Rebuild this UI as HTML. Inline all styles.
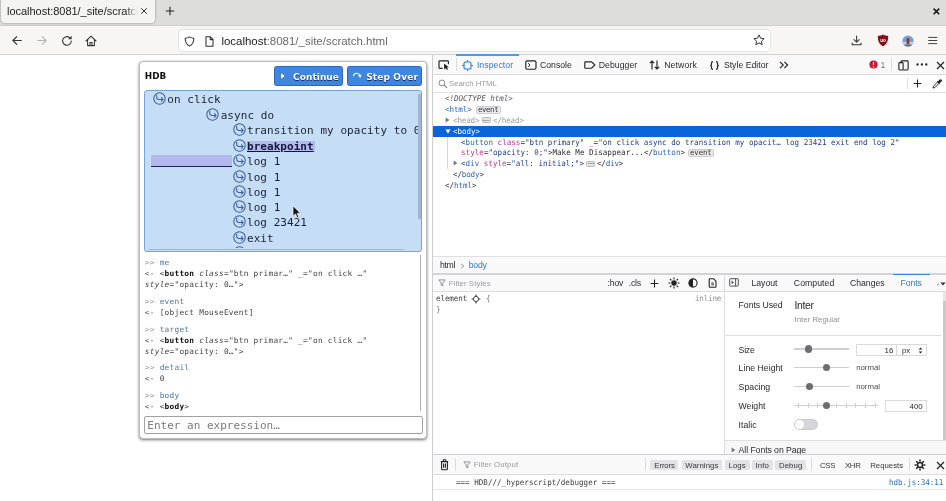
<!DOCTYPE html>
<html><head><meta charset="utf-8"><title>scratch</title>
<style>
*{box-sizing:border-box;margin:0;padding:0}
html,body{width:946px;height:501px;overflow:hidden;background:#fff;font-family:"Liberation Sans",sans-serif;color:#111}
#w{position:absolute;left:0;top:0;width:946px;height:501px;filter:blur(0.45px)}
.a{position:absolute;white-space:nowrap}
.f{white-space:pre}
.cl{font:11px/15.4px "DejaVu Sans Mono",monospace;letter-spacing:0.05px;color:#1b2130;height:15.4px}
.ic{width:13px;height:13px;margin-top:-1.6px}
.cur{font-weight:bold;text-decoration:underline;color:#14183a}
.con b{color:#111}
.ar{color:#9a9aa2}
.al{color:#5a5a5a}
.inp{color:#4a78b0}
.tg{color:#2b62c4}
.an{color:#c030a0}
.av{color:#1c3a9a}
.btn{background:#3f86e0;border:1px solid #2a68bd;border-radius:2px}
</style></head><body>
<div id="w">
<div class="a" style="left:-5px;top:-5px;width:956px;height:31px;background:#dddddb;"></div>
<div class="a" style="left:-5px;top:25.4px;width:956px;height:1px;background:#cdcdca;"></div>
<div class="a" style="left:1px;top:-3px;width:154px;height:26px;background:#f4f4f3;border-radius:0 0 4px 4px;box-shadow:0 0 2.5px rgba(0,0,0,.4)"></div>
<div class="a" style="left:0;top:0;width:138px;height:24px;overflow:hidden;-webkit-mask-image:linear-gradient(90deg,#000 126px,transparent 138px);mask-image:linear-gradient(90deg,#000 126px,transparent 138px)">
<div class="a f" style="left:7.0px;top:3.6px;font:normal normal 11px/14px 'Liberation Sans',sans-serif;color:#1c1c1c;letter-spacing:-0.027px;">localhost:8081/_site/scratch.html</div>
</div>
<svg class="a" style="left:140px;top:7px;" width="8" height="8" viewBox="0 0 8 8"><path d="M1.2 1.2 L6.8 6.8 M6.8 1.2 L1.2 6.8" stroke="#333" stroke-width="1" fill="none"/></svg>
<svg class="a" style="left:164.5px;top:6.1px;" width="10" height="10" viewBox="0 0 10 10"><path d="M5 0.8 V9.2 M0.8 5 H9.2" stroke="#222" stroke-width="1.1" fill="none"/></svg>
<svg class="a" style="left:931.7px;top:7px;" width="9" height="9" viewBox="0 0 9 9"><path d="M1.6 1.6 L7.2 7.2 M7.2 1.6 L1.6 7.2" stroke="#1a1a1a" stroke-width="1.6" fill="none"/></svg>
<div class="a" style="left:-5px;top:26px;width:956px;height:28px;background:#f7f6f4;"></div>
<div class="a" style="left:-5px;top:53.5px;width:956px;height:1px;background:#d2d2d2;"></div>
<svg class="a" style="left:10.5px;top:35px;" width="12" height="11" viewBox="0 0 12 11"><path d="M10.3 5.5 H2 M5.8 1.7 L1.9 5.5 L5.8 9.3" stroke="#333" stroke-width="1.1" fill="none" stroke-linecap="round" stroke-linejoin="round"/></svg>
<svg class="a" style="left:36px;top:35px;" width="12" height="11" viewBox="0 0 12 11"><path d="M1.7 5.5 H10 M6.2 1.7 L10.1 5.5 L6.2 9.3" stroke="#b4b4b4" stroke-width="1.1" fill="none" stroke-linecap="round" stroke-linejoin="round"/></svg>
<svg class="a" style="left:60.5px;top:34.5px;" width="12" height="12" viewBox="0 0 12 12"><path d="M10.2 6 A4.3 4.3 0 1 1 8.6 2.6" stroke="#333" stroke-width="1.1" fill="none" stroke-linecap="round"/><path d="M10.6 0.8 V4.2 H7.2 Z" fill="#333"/></svg>
<svg class="a" style="left:85px;top:34.5px;" width="12" height="12" viewBox="0 0 12 12"><path d="M1 6 L6 1.2 L11 6 M2.6 5.2 V10.6 H9.4 V5.2 M5 10.6 V7.4 H7 V10.6" stroke="#333" stroke-width="1.05" fill="none" stroke-linejoin="round" stroke-linecap="round"/></svg>
<div class="a" style="left:178.6px;top:29.6px;width:591.6px;height:21.8px;background:#fff;border-radius:4px;box-shadow:0 0 0 1px #e3e3e3"></div>
<svg class="a" style="left:184px;top:35.5px;" width="11" height="11" viewBox="0 0 11 11"><path d="M5.5 0.9 C4 1.9 2.6 2.2 1.2 2.2 C1.2 6 2.4 8.6 5.5 10.1 C8.6 8.6 9.8 6 9.8 2.2 C8.4 2.2 7 1.9 5.5 0.9 Z" stroke="#333" stroke-width="1.05" fill="none" stroke-linejoin="round"/></svg>
<svg class="a" style="left:204.5px;top:35.5px;" width="9" height="11" viewBox="0 0 9 11"><path d="M1 0.8 H5.4 L8 3.4 V10.2 H1 Z M5.2 0.9 V3.6 H7.9" stroke="#333" stroke-width="1.05" fill="none" stroke-linejoin="round"/></svg>
<div class="a f" style="left:221.4px;top:33.7px;font:normal normal 11.5px/15px 'Liberation Sans',sans-serif;color:#1a1a1a;letter-spacing:-0.016px;">localhost<span style="color:#6a6a6a">:8081/_site/scratch.html</span></div>
<svg class="a" style="left:753.3px;top:34.3px;" width="12" height="12" viewBox="0 0 12 12"><path d="M6 0.9 L7.55 4.2 L11.1 4.65 L8.5 7.1 L9.15 10.65 L6 8.9 L2.85 10.65 L3.5 7.1 L0.9 4.65 L4.45 4.2 Z" stroke="#333" stroke-width="1" fill="none" stroke-linejoin="round"/></svg>
<svg class="a" style="left:851.3px;top:34.5px;" width="11" height="11" viewBox="0 0 11 11"><path d="M5.6 1 V7 M3 4.6 L5.6 7.2 L8.2 4.6 M1.2 7.9 V9.8 H10 V7.9" stroke="#333" stroke-width="1.05" fill="none" stroke-linecap="round" stroke-linejoin="round"/></svg>
<svg class="a" style="left:876.5px;top:34px;" width="12" height="13" viewBox="0 0 12 13"><path d="M6 0.6 C4.3 1.7 2.6 2 0.8 2 C0.8 7 2.2 10.3 6 12.4 C9.8 10.3 11.2 7 11.2 2 C9.4 2 7.7 1.7 6 0.6 Z" fill="#80101a"/><text x="6" y="8.2" font-size="4.6" font-family="Liberation Sans,sans-serif" font-weight="bold" fill="#fff" text-anchor="middle">uo</text></svg>
<svg class="a" style="left:901.5px;top:34.5px;" width="12" height="12" viewBox="0 0 12 12"><defs><clipPath id="av"><circle cx="6" cy="6" r="5.6"/></clipPath></defs><g clip-path="url(#av)"><rect width="12" height="12" fill="#7a9fd0"/><rect y="7" width="12" height="5" fill="#c9d3e0"/><rect x="4.6" y="3.2" width="2.8" height="6" fill="#8a3a34"/><rect x="0" y="9.5" width="12" height="3" fill="#5a6a80"/></g></svg>
<svg class="a" style="left:926.5px;top:35.5px;" width="11" height="9" viewBox="0 0 11 9"><path d="M1.6 1.4 H9.8 M1.6 4.5 H9.8 M1.6 7.6 H9.8" stroke="#444" stroke-width="1" fill="none" stroke-linecap="round"/></svg>
<div class="a" style="left:-5px;top:54.5px;width:437.5px;height:452px;background:#fff;"></div>
<div class="a" style="left:139.3px;top:61px;width:287.5px;height:378px;background:#fff;border:1px solid #bdbdbd;border-radius:4px;box-shadow:0 1px 3px rgba(0,0,0,.55)"></div>
<div class="a f" style="left:144.8px;top:70.7px;font:normal bold 8.8px/11px 'DejaVu Sans','Liberation Sans',sans-serif;color:#111;letter-spacing:0.008px;">HDB</div>
<div class="a" style="left:274.2px;top:65.6px;width:68.8px;height:20.8px;background:#3f86e0;border:1px solid #2a68bd;border-radius:2.5px"></div>
<div class="a" style="left:347.4px;top:65.6px;width:74.8px;height:20.8px;background:#3f86e0;border:1px solid #2a68bd;border-radius:2.5px"></div>
<svg class="a" style="left:280.3px;top:71.7px;" width="6" height="8" viewBox="0 0 6 8"><path d="M0.8 0.4 L5 4 L0.8 7.6 Z" fill="#fff" stroke="#1d3d70" stroke-width="0.4"/></svg>
<div class="a f" style="left:293.0px;top:70.5px;font:normal bold 9px/12px 'DejaVu Sans','Liberation Sans',sans-serif;color:#fff;letter-spacing:0.061px;text-shadow:0 0.8px 0.8px #0e2a55;">Continue</div>
<svg class="a" style="left:352px;top:70.5px;" width="10" height="9" viewBox="0 0 10 9"><path d="M1.4 5.2 A3.4 3.4 0 0 1 8 4.6" stroke="#fff" stroke-width="1.1" fill="none"/><path d="M9.6 3.4 L8.3 6.9 L5.9 4.4 Z" fill="#fff"/></svg>
<div class="a f" style="left:366.2px;top:70.5px;font:normal bold 9px/12px 'DejaVu Sans','Liberation Sans',sans-serif;color:#fff;letter-spacing:0.141px;text-shadow:0 0.8px 0.8px #0e2a55;">Step Over</div>
<div class="a" style="left:144.4px;top:90.3px;width:277.8px;height:161.6px;background:#c5def6;border:1px solid #78a3d7;border-radius:3px;overflow:hidden">
<svg width="0" height="0" style="position:absolute"><defs><g id="ic" fill="none" stroke="#3d5f98" stroke-width="1.05"><circle cx="6.5" cy="6.5" r="5.7"/><path d="M3.7 2.9 V5.3 Q3.7 7.5 5.9 7.5 H10 M8.2 5.4 L10.1 7.5 L8.2 9.6"/></g></defs></svg>
<div class="a" style="left:6.1px;top:63.9px;width:81px;height:12.3px;background:#b3b9ee;border-bottom:1.3px solid #1d2358"></div>
<div class="a" style="left:101.8px;top:49.3px;width:68px;height:11.6px;background:#b3b9ee;"></div>
<div class="a" style="left:0;top:1px;width:272.8px;height:156px;overflow:hidden">
<svg class="a" style="left:7.5px;top:-0.5px" width="13" height="13" viewBox="0 0 13 13"><use href="#ic"/></svg>
<div class="a cl" style="left:21.9px;top:0px">on click</div>
<svg class="a" style="left:60.4px;top:15.5px" width="13" height="13" viewBox="0 0 13 13"><use href="#ic"/></svg>
<div class="a cl" style="left:75.3px;top:16px">async do</div>
<svg class="a" style="left:88.1px;top:30.5px" width="13" height="13" viewBox="0 0 13 13"><use href="#ic"/></svg>
<div class="a cl" style="left:101.6px;top:31px">transition my opacity to 0</div>
<svg class="a" style="left:88.1px;top:46.5px" width="13" height="13" viewBox="0 0 13 13"><use href="#ic"/></svg>
<div class="a cl cur" style="left:101.6px;top:47px">breakpoint</div>
<svg class="a" style="left:88.1px;top:61.5px" width="13" height="13" viewBox="0 0 13 13"><use href="#ic"/></svg>
<div class="a cl" style="left:101.6px;top:62px">log 1</div>
<svg class="a" style="left:88.1px;top:77.5px" width="13" height="13" viewBox="0 0 13 13"><use href="#ic"/></svg>
<div class="a cl" style="left:101.6px;top:78px">log 1</div>
<svg class="a" style="left:88.1px;top:92.5px" width="13" height="13" viewBox="0 0 13 13"><use href="#ic"/></svg>
<div class="a cl" style="left:101.6px;top:93px">log 1</div>
<svg class="a" style="left:88.1px;top:107.5px" width="13" height="13" viewBox="0 0 13 13"><use href="#ic"/></svg>
<div class="a cl" style="left:101.6px;top:108px">log 1</div>
<svg class="a" style="left:88.1px;top:122.5px" width="13" height="13" viewBox="0 0 13 13"><use href="#ic"/></svg>
<div class="a cl" style="left:101.6px;top:123px">log 23421</div>
<svg class="a" style="left:88.1px;top:138.5px" width="13" height="13" viewBox="0 0 13 13"><use href="#ic"/></svg>
<div class="a cl" style="left:101.6px;top:139px">exit</div>
<svg class="a" style="left:88.1px;top:153.5px" width="13" height="13" viewBox="0 0 13 13"><use href="#ic"/></svg>
<div class="a cl" style="left:101.6px;top:154px">end</div>
</div>
<div class="a" style="left:273.0px;top:2.8px;width:2.4px;height:125px;background:#a0b5d3;"></div>
<div class="a" style="left:4px;top:157.4px;width:255px;height:1.8px;background:#a0b5d3;"></div>
</div>
<div class="a con" style="left:144.8px;top:256.95px;font:7.8px/11px 'DejaVu Sans Mono','Liberation Mono',monospace;letter-spacing:0.25px;color:#444"><span class="ar">&gt;&gt;</span> <span class="inp">me</span></div>
<div class="a con" style="left:144.8px;top:268.05px;font:7.8px/11px 'DejaVu Sans Mono','Liberation Mono',monospace;letter-spacing:0.25px;color:#444"><span class="al">&lt;-</span> &lt;<b>button</b> <i>class</i>="btn primar…" <i>_</i>="on click …"</div>
<div class="a con" style="left:144.8px;top:279.25px;font:7.8px/11px 'DejaVu Sans Mono','Liberation Mono',monospace;letter-spacing:0.25px;color:#444"><i>style</i>="opacity: 0…"&gt;</div>
<div class="a con" style="left:144.8px;top:295.65px;font:7.8px/11px 'DejaVu Sans Mono','Liberation Mono',monospace;letter-spacing:0.25px;color:#444"><span class="ar">&gt;&gt;</span> <span class="inp">event</span></div>
<div class="a con" style="left:144.8px;top:306.75px;font:7.8px/11px 'DejaVu Sans Mono','Liberation Mono',monospace;letter-spacing:0.25px;color:#444"><span class="al">&lt;-</span> [object MouseEvent]</div>
<div class="a con" style="left:144.8px;top:323.55px;font:7.8px/11px 'DejaVu Sans Mono','Liberation Mono',monospace;letter-spacing:0.25px;color:#444"><span class="ar">&gt;&gt;</span> <span class="inp">target</span></div>
<div class="a con" style="left:144.8px;top:334.75px;font:7.8px/11px 'DejaVu Sans Mono','Liberation Mono',monospace;letter-spacing:0.25px;color:#444"><span class="al">&lt;-</span> &lt;<b>button</b> <i>class</i>="btn primar…" <i>_</i>="on click …"</div>
<div class="a con" style="left:144.8px;top:345.85px;font:7.8px/11px 'DejaVu Sans Mono','Liberation Mono',monospace;letter-spacing:0.25px;color:#444"><i>style</i>="opacity: 0…"&gt;</div>
<div class="a con" style="left:144.8px;top:362.25px;font:7.8px/11px 'DejaVu Sans Mono','Liberation Mono',monospace;letter-spacing:0.25px;color:#444"><span class="ar">&gt;&gt;</span> <span class="inp">detail</span></div>
<div class="a con" style="left:144.8px;top:373.45px;font:7.8px/11px 'DejaVu Sans Mono','Liberation Mono',monospace;letter-spacing:0.25px;color:#444"><span class="al">&lt;-</span> 0</div>
<div class="a con" style="left:144.8px;top:390.15px;font:7.8px/11px 'DejaVu Sans Mono','Liberation Mono',monospace;letter-spacing:0.25px;color:#444"><span class="ar">&gt;&gt;</span> <span class="inp">body</span></div>
<div class="a con" style="left:144.8px;top:401.35px;font:7.8px/11px 'DejaVu Sans Mono','Liberation Mono',monospace;letter-spacing:0.25px;color:#444"><span class="al">&lt;-</span> &lt;<b>body</b>&gt;</div>
<div class="a" style="left:419.6px;top:255px;width:1.6px;height:156px;background:#a9adb3;"></div>
<div class="a" style="left:144px;top:416px;width:278.5px;height:18px;background:#fff;border:1px solid #a2a2a2;border-radius:2px"></div>
<div class="a" style="left:147.3px;top:418.7px;font:11px 'DejaVu Sans Mono','Liberation Mono',monospace;color:#7a7a7a">Enter an expression…</div>
<svg class="a" style="left:292px;top:205px;" width="9" height="14" viewBox="0 0 9 14"><path d="M1 0.8 V11.2 L3.5 8.9 L5.3 12.9 L6.9 12.2 L5.2 8.3 L8.4 8.2 Z" fill="#111" stroke="#fff" stroke-width="0.7"/></svg>
<div class="a" style="left:432.5px;top:54.5px;width:520px;height:452px;background:#fff;"></div>
<div class="a" style="left:432.3px;top:54.5px;width:1px;height:452px;background:#cfcfd1;"></div>
<div class="a" style="left:433.3px;top:54.5px;width:520px;height:19.6px;background:#f9f9fa;"></div>
<div class="a" style="left:433.3px;top:74px;width:520px;height:1px;background:#dcdcdf;"></div>
<div class="a" style="left:455.7px;top:54.3px;width:63.2px;height:1.8px;background:#4a9bea;"></div>
<svg class="a" style="left:438px;top:60px;" width="12" height="10" viewBox="0 0 12 10"><path d="M10.4 4.2 V1.6 Q10.4 0.8 9.6 0.8 H1.8 Q1 0.8 1 1.6 V7.6 Q1 8.4 1.8 8.4 H4.6" stroke="#222" stroke-width="1.15" fill="none"/><path d="M6 3.6 L6.2 9.6 L7.7 8.2 L9 10 L10 9.3 L8.8 7.5 L10.8 7.2 Z" fill="#222"/></svg>
<div class="a" style="left:455.6px;top:58px;width:1px;height:13px;background:#dcdcdf;"></div>
<svg class="a" style="left:461.5px;top:59.5px;" width="11" height="11" viewBox="0 0 11 11"><rect x="2" y="2" width="7" height="7" rx="1.6" stroke="#2b7bd3" stroke-width="1.15" fill="none"/><path d="M5.5 0 V1.6 M5.5 9.4 V11 M0 5.5 H1.6 M9.4 5.5 H11" stroke="#2b7bd3" stroke-width="1"/></svg>
<div class="a f" style="left:476.9px;top:59.7px;font:normal normal 8.7px/11px 'Liberation Sans',sans-serif;color:#2b7bd3;letter-spacing:0.063px;">Inspector</div>
<svg class="a" style="left:524.5px;top:60px;" width="12" height="10" viewBox="0 0 12 10"><rect x="0.8" y="0.8" width="10.2" height="8.4" rx="1.4" stroke="#222" stroke-width="1.15" fill="none"/><path d="M3.2 3.2 L5 5 L3.2 6.8" stroke="#222" stroke-width="1" fill="none"/></svg>
<div class="a f" style="left:540.0px;top:59.7px;font:normal normal 8.7px/11px 'Liberation Sans',sans-serif;color:#2a2a2e;letter-spacing:-0.011px;">Console</div>
<svg class="a" style="left:583.5px;top:61px;" width="12" height="8" viewBox="0 0 12 8"><path d="M1.6 0.8 H7.6 L10.8 4 L7.6 7.2 H1.6 Q0.8 7.2 0.8 6.4 V1.6 Q0.8 0.8 1.6 0.8 Z" stroke="#222" stroke-width="1.15" fill="none" stroke-linejoin="round"/></svg>
<div class="a f" style="left:598.8px;top:59.7px;font:normal normal 8.7px/11px 'Liberation Sans',sans-serif;color:#2a2a2e;letter-spacing:0.041px;">Debugger</div>
<svg class="a" style="left:649px;top:60px;" width="11" height="10" viewBox="0 0 11 10"><path d="M3 9.6 V1 M0.8 3.2 L3 1 L5.2 3.2 M8 0.4 V9 M5.8 6.8 L8 9 L10.2 6.8" stroke="#222" stroke-width="1.15" fill="none"/></svg>
<div class="a f" style="left:664.2px;top:59.7px;font:normal normal 8.7px/11px 'Liberation Sans',sans-serif;color:#2a2a2e;letter-spacing:0.118px;">Network</div>
<svg class="a" style="left:709px;top:60.5px;" width="11" height="9" viewBox="0 0 11 9"><path d="M4 0.7 Q2.5 0.7 2.5 2.1 V3.3 Q2.5 4.5 1.1 4.5 Q2.5 4.5 2.5 5.7 V6.9 Q2.5 8.3 4 8.3 M7 0.7 Q8.5 0.7 8.5 2.1 V3.3 Q8.5 4.5 9.9 4.5 Q8.5 4.5 8.5 5.7 V6.9 Q8.5 8.3 7 8.3" stroke="#222" stroke-width="1.2" fill="none"/></svg>
<div class="a f" style="left:723.9px;top:59.7px;font:normal normal 8.7px/11px 'Liberation Sans',sans-serif;color:#2a2a2e;letter-spacing:0.007px;">Style Editor</div>
<svg class="a" style="left:779px;top:61px;" width="10" height="8" viewBox="0 0 10 8"><path d="M1 0.8 L4.2 4 L1 7.2 M5.4 0.8 L8.6 4 L5.4 7.2" stroke="#222" stroke-width="1.15" fill="none"/></svg>
<svg class="a" style="left:868.6px;top:60.3px;" width="9" height="9" viewBox="0 0 9 9"><circle cx="4.5" cy="4.5" r="4.1" fill="#d4132f"/><path d="M4.5 2 V5.2" stroke="#fff" stroke-width="1.2"/><circle cx="4.5" cy="6.8" r="0.7" fill="#fff"/></svg>
<div class="a f" style="left:880.4px;top:60.4px;font:normal normal 8.7px/11px 'Liberation Sans',sans-serif;color:#77777b;letter-spacing:-0.444px;">1</div>
<div class="a" style="left:890.8px;top:58px;width:1px;height:13px;background:#dcdcdf;"></div>
<svg class="a" style="left:897.5px;top:59.5px;" width="11" height="11" viewBox="0 0 11 11"><rect x="0.9" y="2.6" width="4.2" height="7.4" rx="0.9" stroke="#222" stroke-width="1.1" fill="none"/><path d="M3 2.6 V1.8 Q3 0.9 3.9 0.9 H9.2 Q10.1 0.9 10.1 1.8 V9.1 Q10.1 10 9.2 10 H5.2" stroke="#222" stroke-width="1.1" fill="none"/></svg>
<svg class="a" style="left:916px;top:63.3px;" width="12" height="3" viewBox="0 0 12 3"><circle cx="1.5" cy="1.5" r="1.15" fill="#222"/><circle cx="5.9" cy="1.5" r="1.15" fill="#222"/><circle cx="10.3" cy="1.5" r="1.15" fill="#222"/></svg>
<svg class="a" style="left:935.5px;top:60.5px;" width="9" height="9" viewBox="0 0 9 9"><path d="M1 1 L8 8 M8 1 L1 8" stroke="#222" stroke-width="1.15" fill="none"/></svg>
<div class="a" style="left:433.3px;top:92px;width:520px;height:1px;background:#e0e0e2;"></div>
<svg class="a" style="left:437.5px;top:78.5px;" width="10" height="10" viewBox="0 0 10 10"><circle cx="3.9" cy="3.9" r="2.9" stroke="#8a8a8e" stroke-width="1" fill="none"/><path d="M6 6 L9.2 9.2" stroke="#8a8a8e" stroke-width="1.1"/></svg>
<div class="a f" style="left:449.0px;top:78.5px;font:normal normal 7.8px/10px 'Liberation Sans',sans-serif;color:#9a9a9e;letter-spacing:-0.028px;">Search HTML</div>
<div class="a" style="left:906.5px;top:78px;width:1px;height:11px;background:#e0e0e2;"></div>
<svg class="a" style="left:913px;top:79px;" width="9" height="9" viewBox="0 0 9 9"><path d="M4.5 0.6 V8.4 M0.6 4.5 H8.4" stroke="#222" stroke-width="1.1"/></svg>
<svg class="a" style="left:932px;top:78.5px;" width="10" height="10" viewBox="0 0 10 10"><path d="M1 9 L1.4 7.2 L5.6 3 L7 4.4 L2.8 8.6 Z" stroke="#222" stroke-width="0.9" fill="none"/><path d="M5.2 2.4 L7.6 4.8 M6.2 3.2 L7.8 1.2 Q8.6 0.6 9.1 1.2 Q9.6 1.8 8.9 2.4 L6.9 4" stroke="#222" stroke-width="1.2" fill="#222"/></svg>
<div class="a f" style="left:444.8px;top:93.6px;font:italic normal 7.9px/10px 'DejaVu Sans Mono','Liberation Mono',monospace;color:#55555a;letter-spacing:-0.011px;transform:scaleX(0.955);transform-origin:0 0;">&lt;!DOCTYPE html&gt;</div>
<div class="a f" style="left:444.8px;top:104.9px;font:normal normal 7.9px/10px 'DejaVu Sans Mono','Liberation Mono',monospace;color:#2a2a2e;letter-spacing:-0.093px;transform:scaleX(0.955);transform-origin:0 0;"><span class="tg">&lt;html&gt;</span></div>
<div class="a" style="left:476.2px;top:105.8px;width:24.4px;height:7.8px;background:#ebebed;border:0.8px solid #cdcdd1;border-radius:2px"></div>
<div class="a f" style="left:478.4px;top:105.0px;font:normal normal 7.7px/10px 'DejaVu Sans Mono','Liberation Mono',monospace;color:#333;letter-spacing:-0.401px;transform:scaleX(0.955);transform-origin:0 0;">event</div>
<svg class="a" style="left:445.2px;top:117.2px;" width="5" height="6" viewBox="0 0 5 6"><path d="M0.6 0.4 L4.4 3 L0.6 5.6 Z" fill="#77777b"/></svg>
<div class="a f" style="left:452.8px;top:115.6px;font:normal normal 7.9px/10px 'DejaVu Sans Mono','Liberation Mono',monospace;color:#9a9a9e;letter-spacing:-0.145px;transform:scaleX(0.955);transform-origin:0 0;">&lt;head&gt;</div>
<div class="a" style="left:481.7px;top:117.3px;width:9px;height:6px;background:#e6e6e8;border:0.8px solid #b8b8bc;border-radius:1.5px"></div>
<svg class="a" style="left:483.2px;top:119.7px;" width="6" height="1.4" viewBox="0 0 6 1.4"><circle cx="0.9" cy="0.7" r="0.6" fill="#555"/><circle cx="3" cy="0.7" r="0.6" fill="#555"/><circle cx="5.1" cy="0.7" r="0.6" fill="#555"/></svg>
<div class="a f" style="left:492.9px;top:115.6px;font:normal normal 7.9px/10px 'DejaVu Sans Mono','Liberation Mono',monospace;color:#9a9a9e;letter-spacing:-0.145px;transform:scaleX(0.955);transform-origin:0 0;">&lt;/head&gt;</div>
<div class="a" style="left:433.3px;top:126px;width:520px;height:10.8px;background:#0a66d8;"></div>
<svg class="a" style="left:444.6px;top:129.3px;" width="6" height="5" viewBox="0 0 6 5"><path d="M0.4 0.6 L5.6 0.6 L3 4.4 Z" fill="#fff"/></svg>
<div class="a f" style="left:452.8px;top:127.0px;font:normal normal 7.9px/10px 'DejaVu Sans Mono','Liberation Mono',monospace;color:#fff;letter-spacing:-0.058px;transform:scaleX(0.955);transform-origin:0 0;">&lt;body&gt;</div>
<div class="a" style="left:447px;top:137px;width:0.8px;height:32px;background:#d8d8dc;"></div>
<div class="a f" style="left:460.5px;top:137.9px;font:normal normal 7.9px/10px 'DejaVu Sans Mono','Liberation Mono',monospace;color:#2a2a2e;letter-spacing:0.033px;transform:scaleX(0.955);transform-origin:0 0;">&lt;<span class="tg">button</span> <span class="an">class</span>=<span class="av">"btn primary"</span> <span class="an">_</span>=<span class="av">"on click async do transition my opacit… log 23421 exit end log 2"</span></div>
<div class="a f" style="left:460.5px;top:148.2px;font:normal normal 7.9px/10px 'DejaVu Sans Mono','Liberation Mono',monospace;color:#2a2a2e;letter-spacing:0.037px;transform:scaleX(0.955);transform-origin:0 0;"><span class="an">style</span>=<span class="av">"opacity: 0;"</span>&gt;Make Me Disappear...&lt;/<span class="tg">button</span>&gt;</div>
<div class="a" style="left:687.5px;top:149px;width:26.2px;height:7.8px;background:#ebebed;border:0.8px solid #cdcdd1;border-radius:2px"></div>
<div class="a f" style="left:689.8px;top:148.3px;font:normal normal 7.7px/10px 'DejaVu Sans Mono','Liberation Mono',monospace;color:#333;letter-spacing:-0.087px;transform:scaleX(0.955);transform-origin:0 0;">event</div>
<svg class="a" style="left:453.4px;top:160.4px;" width="5" height="6" viewBox="0 0 5 6"><path d="M0.6 0.4 L4.4 3 L0.6 5.6 Z" fill="#77777b"/></svg>
<div class="a f" style="left:460.5px;top:158.8px;font:normal normal 7.9px/10px 'DejaVu Sans Mono','Liberation Mono',monospace;color:#2a2a2e;letter-spacing:0.016px;transform:scaleX(0.955);transform-origin:0 0;">&lt;<span class="tg">div</span> <span class="an">style</span>=<span class="av">"all: initial;"</span>&gt;</div>
<div class="a" style="left:586px;top:160.5px;width:9px;height:6px;background:#e6e6e8;border:0.8px solid #b8b8bc;border-radius:1.5px"></div>
<svg class="a" style="left:587.5px;top:162.9px;" width="6" height="1.4" viewBox="0 0 6 1.4"><circle cx="0.9" cy="0.7" r="0.6" fill="#555"/><circle cx="3" cy="0.7" r="0.6" fill="#555"/><circle cx="5.1" cy="0.7" r="0.6" fill="#555"/></svg>
<div class="a f" style="left:597.0px;top:158.8px;font:normal normal 7.9px/10px 'DejaVu Sans Mono','Liberation Mono',monospace;color:#2a2a2e;letter-spacing:-0.185px;transform:scaleX(0.955);transform-origin:0 0;">&lt;/<span class="tg">div</span>&gt;</div>
<div class="a f" style="left:452.8px;top:170.1px;font:normal normal 7.9px/10px 'DejaVu Sans Mono','Liberation Mono',monospace;color:#2a2a2e;letter-spacing:-0.149px;transform:scaleX(0.955);transform-origin:0 0;">&lt;/<span class="tg">body</span>&gt;</div>
<div class="a f" style="left:444.8px;top:181.3px;font:normal normal 7.9px/10px 'DejaVu Sans Mono','Liberation Mono',monospace;color:#2a2a2e;letter-spacing:-0.060px;transform:scaleX(0.955);transform-origin:0 0;">&lt;/<span class="tg">html</span>&gt;</div>
<div class="a" style="left:433.3px;top:256.3px;width:520px;height:1px;background:#e0e0e2;"></div>
<div class="a" style="left:433.3px;top:257.3px;width:520px;height:16.4px;background:#f9f9fa;"></div>
<div class="a" style="left:433.3px;top:273.4px;width:520px;height:1.2px;background:#d4d4d8;"></div>
<div class="a f" style="left:439.9px;top:259.9px;font:normal normal 8.7px/11px 'Liberation Sans',sans-serif;color:#2a2a2e;letter-spacing:-0.330px;">html</div>
<svg class="a" style="left:460.2px;top:262.8px;" width="5" height="6" viewBox="0 0 5 6"><path d="M1 0.8 L3.8 3 L1 5.2" stroke="#8a8a8e" stroke-width="0.9" fill="none"/></svg>
<div class="a f" style="left:468.7px;top:259.9px;font:normal normal 8.7px/11px 'Liberation Sans',sans-serif;color:#2b7bd3;letter-spacing:-0.236px;">body</div>
<div class="a" style="left:433.3px;top:274.6px;width:520px;height:16.4px;background:#f9f9fa;"></div>
<div class="a" style="left:433.3px;top:291px;width:520px;height:1px;background:#dcdcdf;"></div>
<svg class="a" style="left:438px;top:279px;" width="8" height="8" viewBox="0 0 8 8"><path d="M0.8 0.9 H7.2 L4.8 4 V7 L3.2 6.2 V4 Z" stroke="#8a8a8e" stroke-width="0.9" fill="none" stroke-linejoin="round"/></svg>
<div class="a f" style="left:448.7px;top:278.5px;font:normal normal 7.8px/10px 'Liberation Sans',sans-serif;color:#9a9a9e;letter-spacing:0.097px;">Filter Styles</div>
<div class="a f" style="left:607.5px;top:277.9px;font:normal normal 8.7px/11px 'Liberation Sans',sans-serif;color:#2a2a2e;letter-spacing:-0.180px;">:hov</div>
<div class="a f" style="left:628.7px;top:277.9px;font:normal normal 8.7px/11px 'Liberation Sans',sans-serif;color:#2a2a2e;letter-spacing:-0.183px;">.cls</div>
<svg class="a" style="left:649.8px;top:278.7px;" width="9" height="9" viewBox="0 0 9 9"><path d="M4.5 0.6 V8.4 M0.6 4.5 H8.4" stroke="#222" stroke-width="1.1"/></svg>
<svg class="a" style="left:667.5px;top:277px;" width="12" height="12" viewBox="0 0 12 12"><circle cx="6" cy="6" r="2.7" fill="#222"/><path d="M6 0.4 V2.4 M6 9.6 V11.6 M0.4 6 H2.4 M9.6 6 H11.6 M2 2 L3.4 3.4 M8.6 8.6 L10 10 M2 10 L3.4 8.6 M8.6 3.4 L10 2" stroke="#222" stroke-width="1.1"/></svg>
<svg class="a" style="left:688px;top:278.2px;" width="10" height="10" viewBox="0 0 10 10"><circle cx="5" cy="5" r="4.1" stroke="#222" stroke-width="1.1" fill="none"/><path d="M5 0.9 A4.1 4.1 0 0 0 5 9.1 Z" fill="#222"/></svg>
<svg class="a" style="left:708px;top:278px;" width="9" height="10" viewBox="0 0 9 10"><path d="M2 0.8 H5.6 L8 3.2 V8.4 Q8 9.2 7.2 9.2 H2 Q1.2 9.2 1.2 8.4 V1.6 Q1.2 0.8 2 0.8 Z" stroke="#222" stroke-width="1.1" fill="none"/><path d="M3.2 5 H6 M3.2 6.8 H6" stroke="#222" stroke-width="0.9"/></svg>
<div class="a f" style="left:435.7px;top:294.0px;font:normal normal 7.9px/10px 'DejaVu Sans Mono','Liberation Mono',monospace;color:#3a3a3e;letter-spacing:-0.100px;transform:scaleX(0.955);transform-origin:0 0;">element</div>
<svg class="a" style="left:471.2px;top:293.6px;" width="10" height="10" viewBox="0 0 10 10"><circle cx="5" cy="5" r="2.6" stroke="#444" stroke-width="1" fill="none"/><path d="M5 0.6 V2.2 M5 7.8 V9.4 M0.6 5 H2.2 M7.8 5 H9.4" stroke="#444" stroke-width="1.2"/></svg>
<div class="a f" style="left:486.0px;top:294.0px;font:normal normal 7.9px/10px 'DejaVu Sans Mono','Liberation Mono',monospace;color:#77777b;letter-spacing:-0.054px;transform:scaleX(0.955);transform-origin:0 0;">{</div>
<div class="a f" style="left:435.7px;top:305.0px;font:normal normal 7.9px/10px 'DejaVu Sans Mono','Liberation Mono',monospace;color:#77777b;letter-spacing:-0.054px;transform:scaleX(0.955);transform-origin:0 0;">}</div>
<div class="a f" style="left:695.0px;top:293.6px;font:normal normal 7.9px/10px 'DejaVu Sans Mono','Liberation Mono',monospace;color:#8f8f94;letter-spacing:-0.180px;transform:scaleX(0.955);transform-origin:0 0;">inline</div>
<div class="a" style="left:724.3px;top:274.6px;width:1px;height:180px;background:#dcdcdf;"></div>
<svg class="a" style="left:729px;top:278.2px;" width="10" height="9" viewBox="0 0 10 9"><rect x="0.7" y="0.7" width="8.6" height="7.4" rx="0.8" stroke="#444" stroke-width="0.9" fill="none"/><path d="M6.6 0.7 V8.1" stroke="#444" stroke-width="0.9"/><path d="M2.6 2.6 L4.8 4.4 L2.6 6.2 Z" fill="#444"/></svg>
<div class="a f" style="left:751.4px;top:277.9px;font:normal normal 8.7px/11px 'Liberation Sans',sans-serif;color:#2a2a2e;letter-spacing:0.001px;">Layout</div>
<div class="a f" style="left:793.8px;top:277.9px;font:normal normal 8.7px/11px 'Liberation Sans',sans-serif;color:#2a2a2e;letter-spacing:0.063px;">Computed</div>
<div class="a f" style="left:850.1px;top:277.9px;font:normal normal 8.7px/11px 'Liberation Sans',sans-serif;color:#2a2a2e;letter-spacing:-0.054px;">Changes</div>
<div class="a f" style="left:900.4px;top:277.9px;font:normal normal 8.7px/11px 'Liberation Sans',sans-serif;color:#2b7bd3;letter-spacing:-0.067px;">Fonts</div>
<div class="a" style="left:893px;top:273.6px;width:36.8px;height:1.8px;background:#2f8ae0;"></div>
<svg class="a" style="left:936.5px;top:281px;" width="9" height="6" viewBox="0 0 9 6"><path d="M3.4 1.4 L8.6 1.4 L6 4.6 Z" fill="#333"/><path d="M0.6 4.4 L1.4 2.6" stroke="#555" stroke-width="0.8"/></svg>
<div class="a f" style="left:738.6px;top:299.9px;font:normal normal 8.7px/11px 'Liberation Sans',sans-serif;color:#2a2a2e;letter-spacing:-0.042px;">Fonts Used</div>
<div class="a f" style="left:794.5px;top:298.5px;font:normal normal 10.4px/14px 'Liberation Sans',sans-serif;color:#2a2a2e;letter-spacing:-0.339px;">Inter</div>
<div class="a f" style="left:794.5px;top:315.4px;font:normal normal 7.8px/10px 'Liberation Sans',sans-serif;color:#8f8f94;letter-spacing:0.025px;">Inter Regular</div>
<div class="a" style="left:725.3px;top:334.5px;width:216px;height:1px;background:#e0e0e2;"></div>
<div class="a f" style="left:738.6px;top:344.6px;font:normal normal 8.7px/11px 'Liberation Sans',sans-serif;color:#2a2a2e;letter-spacing:-0.227px;">Size</div>
<div class="a" style="left:794px;top:348.4px;width:55px;height:1.2px;background:#cfcfd3;"></div>
<div class="a" style="left:804.6999999999999px;top:345.29999999999995px;width:7.4px;height:7.4px;border-radius:50%;background:#6d6d70"></div>
<div class="a" style="left:856.2px;top:343.8px;width:41.1px;height:12.6px;background:#fff;border:1px solid #dadade"></div>
<div class="a f" style="left:884.6px;top:346.0px;font:normal normal 7.9px/10px 'Liberation Sans',sans-serif;color:#2a2a2e;letter-spacing:-0.091px;">16</div>
<div class="a" style="left:897.3px;top:343.8px;width:29.3px;height:12.6px;background:#fff;border:1px solid #dadade;border-left:none"></div>
<div class="a f" style="left:902.0px;top:345.5px;font:normal normal 7.8px/10px 'Liberation Sans',sans-serif;color:#2a2a2e;letter-spacing:-0.125px;">px</div>
<svg class="a" style="left:917.7px;top:346.6px;" width="5" height="7" viewBox="0 0 5 7"><path d="M0.6 2.6 L2.5 0.5 L4.4 2.6 Z M0.6 4.4 L2.5 6.5 L4.4 4.4 Z" fill="#222"/></svg>
<div class="a f" style="left:738.6px;top:363.1px;font:normal normal 8.7px/11px 'Liberation Sans',sans-serif;color:#2a2a2e;letter-spacing:0.022px;">Line Height</div>
<div class="a" style="left:794px;top:366.9px;width:55px;height:1.2px;background:#cfcfd3;"></div>
<div class="a" style="left:822.5999999999999px;top:363.79999999999995px;width:7.4px;height:7.4px;border-radius:50%;background:#6d6d70"></div>
<div class="a f" style="left:856.2px;top:363.1px;font:normal normal 7.8px/10px 'Liberation Sans',sans-serif;color:#4a4a4e;letter-spacing:-0.007px;">normal</div>
<div class="a f" style="left:738.6px;top:381.5px;font:normal normal 8.7px/11px 'Liberation Sans',sans-serif;color:#2a2a2e;letter-spacing:0.028px;">Spacing</div>
<div class="a" style="left:794px;top:385.8px;width:55px;height:1.2px;background:#cfcfd3;"></div>
<div class="a" style="left:805.9px;top:382.7px;width:7.4px;height:7.4px;border-radius:50%;background:#6d6d70"></div>
<div class="a f" style="left:856.2px;top:381.9px;font:normal normal 7.8px/10px 'Liberation Sans',sans-serif;color:#4a4a4e;letter-spacing:-0.007px;">normal</div>
<div class="a f" style="left:738.6px;top:400.5px;font:normal normal 8.7px/11px 'Liberation Sans',sans-serif;color:#2a2a2e;letter-spacing:-0.015px;">Weight</div>
<div class="a" style="left:794px;top:404.7px;width:84.10000000000002px;height:1.2px;background:#cfcfd3;"></div>
<div class="a" style="left:798.0px;top:402.8px;width:0.9px;height:5px;background:#cfcfd3;"></div>
<div class="a" style="left:807.57px;top:402.8px;width:0.9px;height:5px;background:#cfcfd3;"></div>
<div class="a" style="left:817.14px;top:402.8px;width:0.9px;height:5px;background:#cfcfd3;"></div>
<div class="a" style="left:826.71px;top:402.8px;width:0.9px;height:5px;background:#cfcfd3;"></div>
<div class="a" style="left:836.28px;top:402.8px;width:0.9px;height:5px;background:#cfcfd3;"></div>
<div class="a" style="left:845.85px;top:402.8px;width:0.9px;height:5px;background:#cfcfd3;"></div>
<div class="a" style="left:855.42px;top:402.8px;width:0.9px;height:5px;background:#cfcfd3;"></div>
<div class="a" style="left:864.99px;top:402.8px;width:0.9px;height:5px;background:#cfcfd3;"></div>
<div class="a" style="left:874.56px;top:402.8px;width:0.9px;height:5px;background:#cfcfd3;"></div>
<div class="a" style="left:822.5999999999999px;top:401.59999999999997px;width:7.4px;height:7.4px;border-radius:50%;background:#6d6d70"></div>
<div class="a" style="left:885.3px;top:399.9px;width:41.3px;height:12.6px;background:#fff;border:1px solid #dadade"></div>
<div class="a f" style="left:909.6px;top:402.0px;font:normal normal 7.9px/10px 'Liberation Sans',sans-serif;color:#2a2a2e;letter-spacing:-0.057px;">400</div>
<div class="a f" style="left:738.6px;top:419.7px;font:normal normal 8.7px/11px 'Liberation Sans',sans-serif;color:#2a2a2e;letter-spacing:0.021px;">Italic</div>
<div class="a" style="left:794px;top:418.5px;width:23.5px;height:11.9px;background:#d6d6da;border-radius:6px;border:1px solid #cbcbcf"></div>
<div class="a" style="left:795.4px;top:419.9px;width:9.1px;height:9.1px;border-radius:50%;background:#fff"></div>
<div class="a" style="left:725.3px;top:440.3px;width:226px;height:1px;background:#e0e0e2;"></div>
<div class="a" style="left:725.3px;top:441.3px;width:226px;height:13px;background:#f7f7f8;"></div>
<svg class="a" style="left:730.5px;top:446.8px;" width="5" height="6" viewBox="0 0 5 6"><path d="M0.6 0.4 L4.4 3 L0.6 5.6 Z" fill="#77777b"/></svg>
<div class="a f" style="left:738.6px;top:444.7px;font:normal normal 8.7px/11px 'Liberation Sans',sans-serif;color:#2a2a2e;letter-spacing:-0.069px;">All Fonts on Page</div>
<div class="a" style="left:942.6px;top:292px;width:8px;height:148px;background:#e6e6e8;"></div>
<div class="a" style="left:942.8px;top:301px;width:8px;height:139px;background:#c8c8cb;"></div>
<div class="a" style="left:433.3px;top:454.2px;width:520px;height:1px;background:#cfcfd3;"></div>
<div class="a" style="left:433.3px;top:455.2px;width:520px;height:18.4px;background:#f9f9fa;"></div>
<div class="a" style="left:433.3px;top:473.6px;width:520px;height:1px;background:#dcdcdf;"></div>
<svg class="a" style="left:440px;top:459px;" width="9" height="12" viewBox="0 0 9 12"><path d="M0.8 2.6 H8.2 M3.2 2.4 V1.4 Q3.2 0.8 3.8 0.8 H5.2 Q5.8 0.8 5.8 1.4 V2.4 M1.6 2.8 V9.8 Q1.6 10.8 2.6 10.8 H6.4 Q7.4 10.8 7.4 9.8 V2.8 M3.6 4.6 V8.8 M5.4 4.6 V8.8" stroke="#222" stroke-width="1.1" fill="none"/></svg>
<div class="a" style="left:455.3px;top:458px;width:1px;height:13px;background:#dcdcdf;"></div>
<svg class="a" style="left:462.5px;top:461px;" width="8" height="8" viewBox="0 0 8 8"><path d="M0.8 0.9 H7.2 L4.8 4 V7 L3.2 6.2 V4 Z" stroke="#8a8a8e" stroke-width="0.9" fill="none" stroke-linejoin="round"/></svg>
<div class="a f" style="left:473.7px;top:460.4px;font:normal normal 7.8px/10px 'Liberation Sans',sans-serif;color:#9a9a9e;letter-spacing:0.123px;">Filter Output</div>
<div class="a" style="left:645px;top:458px;width:1px;height:13px;background:#dcdcdf;"></div>
<div class="a" style="left:650.2px;top:460.1px;width:28.299999999999955px;height:9.8px;background:#e3e3e5;border-radius:1.5px"></div>
<div class="a f" style="left:654.3px;top:461.2px;font:normal normal 7.8px/10px 'Liberation Sans',sans-serif;color:#38383d;letter-spacing:-0.106px;">Errors</div>
<div class="a" style="left:681.8px;top:460.1px;width:39.90000000000009px;height:9.8px;background:#e3e3e5;border-radius:1.5px"></div>
<div class="a f" style="left:685.3px;top:461.2px;font:normal normal 7.8px/10px 'Liberation Sans',sans-serif;color:#38383d;letter-spacing:0.055px;">Warnings</div>
<div class="a" style="left:725px;top:460.1px;width:24.799999999999955px;height:9.8px;background:#e3e3e5;border-radius:1.5px"></div>
<div class="a f" style="left:728.6px;top:461.2px;font:normal normal 7.8px/10px 'Liberation Sans',sans-serif;color:#38383d;letter-spacing:0.020px;">Logs</div>
<div class="a" style="left:752px;top:460.1px;width:20.600000000000023px;height:9.8px;background:#e3e3e5;border-radius:1.5px"></div>
<div class="a f" style="left:755.5px;top:461.2px;font:normal normal 7.8px/10px 'Liberation Sans',sans-serif;color:#38383d;letter-spacing:0.121px;">Info</div>
<div class="a" style="left:775.3px;top:460.1px;width:30.800000000000068px;height:9.8px;background:#e3e3e5;border-radius:1.5px"></div>
<div class="a f" style="left:778.9px;top:461.2px;font:normal normal 7.8px/10px 'Liberation Sans',sans-serif;color:#38383d;letter-spacing:0.123px;">Debug</div>
<div class="a" style="left:811.4px;top:458px;width:1px;height:13px;background:#dcdcdf;"></div>
<div class="a f" style="left:820.1px;top:461.2px;font:normal normal 7.8px/10px 'Liberation Sans',sans-serif;color:#38383d;letter-spacing:-0.382px;">CSS</div>
<div class="a f" style="left:844.9px;top:461.2px;font:normal normal 7.8px/10px 'Liberation Sans',sans-serif;color:#38383d;letter-spacing:-0.290px;">XHR</div>
<div class="a f" style="left:870.2px;top:461.2px;font:normal normal 7.8px/10px 'Liberation Sans',sans-serif;color:#38383d;letter-spacing:0.006px;">Requests</div>
<div class="a" style="left:908.6px;top:458px;width:1px;height:13px;background:#dcdcdf;"></div>
<svg class="a" style="left:913.6px;top:458.8px;" width="12" height="12" viewBox="0 0 12 12"><circle cx="6" cy="6" r="2.5" stroke="#222" stroke-width="1.5" fill="none"/><path d="M6 0.6 V2.6 M6 9.4 V11.4 M0.6 6 H2.6 M9.4 6 H11.4 M2.2 2.2 L3.6 3.6 M8.4 8.4 L9.8 9.8 M2.2 9.8 L3.6 8.4 M8.4 3.6 L9.8 2.2" stroke="#222" stroke-width="1.5"/></svg>
<svg class="a" style="left:935.5px;top:460.5px;" width="9" height="9" viewBox="0 0 9 9"><path d="M1 1 L8 8 M8 1 L1 8" stroke="#222" stroke-width="1.15" fill="none"/></svg>
<div class="a" style="left:433.3px;top:488.8px;width:520px;height:1px;background:#e6e6e8;"></div>
<div class="a f" style="left:455.5px;top:477.6px;font:normal normal 7.9px/10px 'DejaVu Sans Mono','Liberation Mono',monospace;color:#3a3a3e;letter-spacing:0.021px;transform:scaleX(0.955);transform-origin:0 0;">=== HDB///_hyperscript/debugger ===</div>
<div class="a f" style="left:888.6px;top:477.6px;font:normal normal 7.9px/10px 'DejaVu Sans Mono','Liberation Mono',monospace;color:#2b6fc4;letter-spacing:-0.004px;transform:scaleX(0.955);transform-origin:0 0;">hdb.js:34:11</div>
</div>
</body></html>
